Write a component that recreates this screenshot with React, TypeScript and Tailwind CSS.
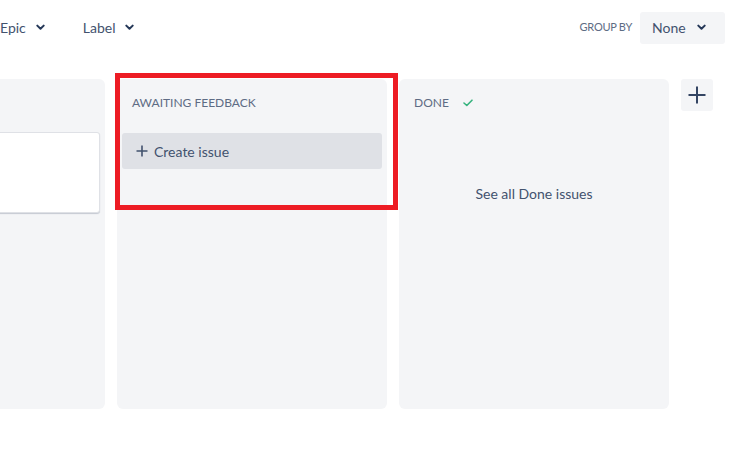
import React from "react";

const Chevron = ({ ml = "ml-[10px]" }: { ml?: string }) => (
  <svg width="9" height="7" viewBox="0 0 9 7" className={ml}>
    <path d="M1.3 1.6 L4.5 4.8 L7.7 1.6" fill="none" stroke="#253858" strokeWidth="2" strokeLinecap="round" strokeLinejoin="round" />
  </svg>
);

export default function App() {
  return (
    <div
      className="w-[747px] h-[461px] overflow-hidden bg-white text-[#42526e]"
      style={{ fontFamily: '"Lato", "Noto Sans", sans-serif' }}
    >
      <div className="flex h-[56px] items-center pb-[1px]">
        <div className="flex items-center text-[14px] text-[#42526e]">
          <span>Epic</span>
          <Chevron />
        </div>
        <div className="ml-[38px] flex items-center text-[14px] text-[#42526e]">
          <span>Label</span>
          <Chevron />
        </div>
        <div className="ml-auto flex items-center pr-[22px]">
          <span className="text-[11px] text-[#5e6c84] tracking-tight">GROUP BY</span>
          <div className="ml-[8px] flex h-[32px] w-[85px] items-center rounded-[3px] bg-[#f4f5f7] pl-[12px] text-[14px] text-[#42526e]">
            <span>None</span>
            <Chevron ml="ml-[11px]" />
          </div>
        </div>
      </div>

      <div className="mt-[23px] flex gap-[12px] ml-[-165px]">
        <div className="flex h-[330px] w-[270px] shrink-0 flex-col rounded-[6px] bg-[#f4f5f7]">
          <div className="h-[53px]" />
          <div className="mx-[5px] h-[81px] rounded-[3px] border border-[#dfe1e6] bg-white shadow-[0_1px_1px_rgba(9,30,66,0.2)]" />
        </div>

        <div className="relative flex h-[330px] w-[270px] shrink-0 flex-col rounded-[6px] bg-[#f4f5f7]">
          <div className="flex h-[48px] items-center px-[15px] text-[12px] text-[#5e6c84]">
            AWAITING FEEDBACK
          </div>
          <div className="mx-[5px] mt-[6px] flex h-[36px] items-center rounded-[3px] bg-[#dfe1e6] pl-[14px] text-[14px] text-[#42526e]">
            <svg width="12" height="12" viewBox="0 0 12 12">
              <path d="M6 0.5 V11.5 M0.5 6 H11.5" stroke="#42526e" strokeWidth="1.6" />
            </svg>
            <span className="ml-[6px]">Create issue</span>
          </div>
          <div className="pointer-events-none absolute left-[-2px] top-[-6px] h-[137px] w-[283px] border-[5px] border-[#ed1c24]" />
        </div>

        <div className="flex h-[330px] w-[270px] shrink-0 flex-col rounded-[6px] bg-[#f4f5f7]">
          <div className="flex h-[48px] items-center px-[15px] text-[12px] text-[#5e6c84]">
            <span>DONE</span>
            <svg width="10" height="8" viewBox="0 0 10 8" className="ml-[14px]">
              <path d="M1 4 L3.8 6.5 L9 1.2" fill="none" stroke="#36b37e" strokeWidth="1.6" strokeLinecap="round" strokeLinejoin="round" />
            </svg>
          </div>
          <div className="mt-[56px] text-center text-[14px] text-[#42526e]">See all Done issues</div>
        </div>

        <div className="flex h-[32px] w-[32px] shrink-0 items-center justify-center rounded-[3px] bg-[#f4f5f7]">
          <svg width="18" height="18" viewBox="0 0 18 18">
            <path d="M9 0.5 V17.5 M0.5 9 H17.5" stroke="#344563" strokeWidth="2" />
          </svg>
        </div>
      </div>
    </div>
  );
}
